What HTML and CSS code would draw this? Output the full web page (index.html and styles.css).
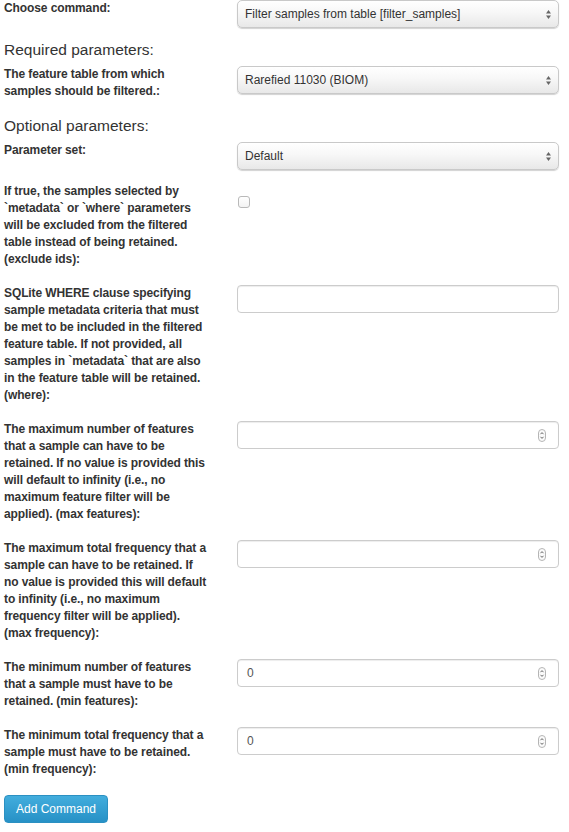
FILE: index.html
```html
<!DOCTYPE html>
<html>
<head>
<meta charset="utf-8">
<title>Filter samples</title>
<link rel="stylesheet" href="styles.css">
</head>
<body>
<form class="cmd-form">
  <div class="row">
    <label class="lbl">Choose command:</label>
    <div class="select">
      <span class="select-text">Filter samples from table [filter_samples]</span>
      <svg class="caret" width="5" height="9" viewBox="0 0 5 9"><polygon points="0,3.5 2.5,0 5,3.5"/><polygon points="0,5.5 2.5,9 5,5.5"/></svg>
    </div>
  </div>

  <h4 class="section">Required parameters:</h4>
  <div class="row">
    <label class="lbl">The feature table from which samples should be filtered.:</label>
    <div class="select">
      <span class="select-text">Rarefied 11030 (BIOM)</span>
      <svg class="caret" width="5" height="9" viewBox="0 0 5 9"><polygon points="0,3.5 2.5,0 5,3.5"/><polygon points="0,5.5 2.5,9 5,5.5"/></svg>
    </div>
  </div>

  <h4 class="section">Optional parameters:</h4>
  <div class="row">
    <label class="lbl">Parameter set:</label>
    <div class="select">
      <span class="select-text">Default</span>
      <svg class="caret" width="5" height="9" viewBox="0 0 5 9"><polygon points="0,3.5 2.5,0 5,3.5"/><polygon points="0,5.5 2.5,9 5,5.5"/></svg>
    </div>
  </div>

  <div class="row">
    <label class="lbl">If true, the samples selected by `metadata` or `where` parameters will be excluded from the filtered table instead of being retained. (exclude ids):</label>
    <div class="check-wrap"><span class="checkbox"></span></div>
  </div>

  <div class="row">
    <label class="lbl">SQLite WHERE clause specifying sample metadata criteria that must be met to be included in the filtered feature table. If not provided, all samples in `metadata` that are also in the feature table will be retained. (where):</label>
    <div class="input"></div>
  </div>

  <div class="row">
    <label class="lbl">The maximum number of features that a sample can have to be retained. If no value is provided this will default to infinity (i.e., no maximum feature filter will be applied). (max features):</label>
    <div class="input number">
      <span class="value"></span>
      <svg class="spin" width="8" height="13" viewBox="0 0 8 13"><rect x="0.5" y="0.5" width="7" height="12" rx="3.5"/><path d="M2.5 5.2 L4 3.6 L5.5 5.2 M2.5 7.8 L4 9.4 L5.5 7.8"/></svg>
    </div>
  </div>

  <div class="row">
    <label class="lbl">The maximum total frequency that a sample can have to be retained. If no value is provided this will default to infinity (i.e., no maximum frequency filter will be applied). (max frequency):</label>
    <div class="input number">
      <span class="value"></span>
      <svg class="spin" width="8" height="13" viewBox="0 0 8 13"><rect x="0.5" y="0.5" width="7" height="12" rx="3.5"/><path d="M2.5 5.2 L4 3.6 L5.5 5.2 M2.5 7.8 L4 9.4 L5.5 7.8"/></svg>
    </div>
  </div>

  <div class="row">
    <label class="lbl">The minimum number of features that a sample must have to be retained. (min features):</label>
    <div class="input number">
      <span class="value">0</span>
      <svg class="spin" width="8" height="13" viewBox="0 0 8 13"><rect x="0.5" y="0.5" width="7" height="12" rx="3.5"/><path d="M2.5 5.2 L4 3.6 L5.5 5.2 M2.5 7.8 L4 9.4 L5.5 7.8"/></svg>
    </div>
  </div>

  <div class="row">
    <label class="lbl">The minimum total frequency that a sample must have to be retained. (min frequency):</label>
    <div class="input number">
      <span class="value">0</span>
      <svg class="spin" width="8" height="13" viewBox="0 0 8 13"><rect x="0.5" y="0.5" width="7" height="12" rx="3.5"/><path d="M2.5 5.2 L4 3.6 L5.5 5.2 M2.5 7.8 L4 9.4 L5.5 7.8"/></svg>
    </div>
  </div>

  <button type="button" class="btn">Add Command</button>
</form>
</body>
</html>
```

FILE: styles.css
```css
html, body {
  margin: 0;
  padding: 0;
  background: #ffffff;
}

body {
  font-family: "Liberation Sans", Arial, Helvetica, sans-serif;
  font-size: 12px;
  color: #333333;
}

.cmd-form {
  padding: 0 10px 0 4px;
}

.row {
  display: grid;
  grid-template-columns: 206px 1fr;
  column-gap: 27px;
  align-items: start;
  margin-bottom: 13px;
}

.lbl {
  display: block;
  font-weight: bold;
  font-size: 12px;
  line-height: 17px;
  letter-spacing: -0.1px;
  padding-bottom: 4px;
  color: #333333;
}

.section {
  margin: 0 0 8px 0;
  font-size: 15.5px;
  line-height: 17px;
  font-weight: normal;
  color: #333333;
}

.select {
  box-sizing: border-box;
  height: 28px;
  display: flex;
  align-items: center;
  justify-content: space-between;
  padding: 0 7px 0 7px;
  border: 1px solid #c9c9c9;
  border-radius: 5px;
  background: linear-gradient(to bottom, #ffffff 0%, #f7f7f7 45%, #e8e8e8 100%);
  box-shadow: 0 1px 1px rgba(0, 0, 0, 0.18);
  font-size: 12px;
  color: #333333;
}

.select-text {
  white-space: nowrap;
}

.caret {
  fill: #666666;
  flex: none;
}

.check-wrap {
  padding-top: 13px;
  padding-left: 1px;
}

.checkbox {
  display: block;
  box-sizing: border-box;
  width: 12px;
  height: 12px;
  border: 1px solid #b9b9b9;
  border-radius: 3px;
  background: linear-gradient(to bottom, #ffffff, #f3f3f3);
}

.input {
  box-sizing: border-box;
  height: 28px;
  border: 1px solid #cccccc;
  border-radius: 4px;
  background: #ffffff;
  box-shadow: inset 0 1px 1px rgba(0, 0, 0, 0.075);
}

.number {
  display: flex;
  align-items: center;
  justify-content: space-between;
  padding: 0 12px 0 9px;
  font-size: 12px;
  color: #555555;
}

.spin {
  flex: none;
}

.spin rect {
  fill: #fbfbfb;
  stroke: #b5b5b5;
  stroke-width: 1;
}

.spin path {
  fill: none;
  stroke: #666666;
  stroke-width: 1;
}

.btn {
  display: block;
  box-sizing: border-box;
  width: 104px;
  height: 28px;
  margin: 1px 0 0 0;
  padding: 0;
  border: 1px solid #2b90c2;
  border-radius: 4px;
  background: linear-gradient(to bottom, #42addd 0%, #2791c6 100%);
  color: #ffffff;
  font-family: "Liberation Sans", Arial, Helvetica, sans-serif;
  font-size: 12px;
  line-height: 26px;
  white-space: nowrap;
  text-align: center;
  cursor: pointer;
}
```
